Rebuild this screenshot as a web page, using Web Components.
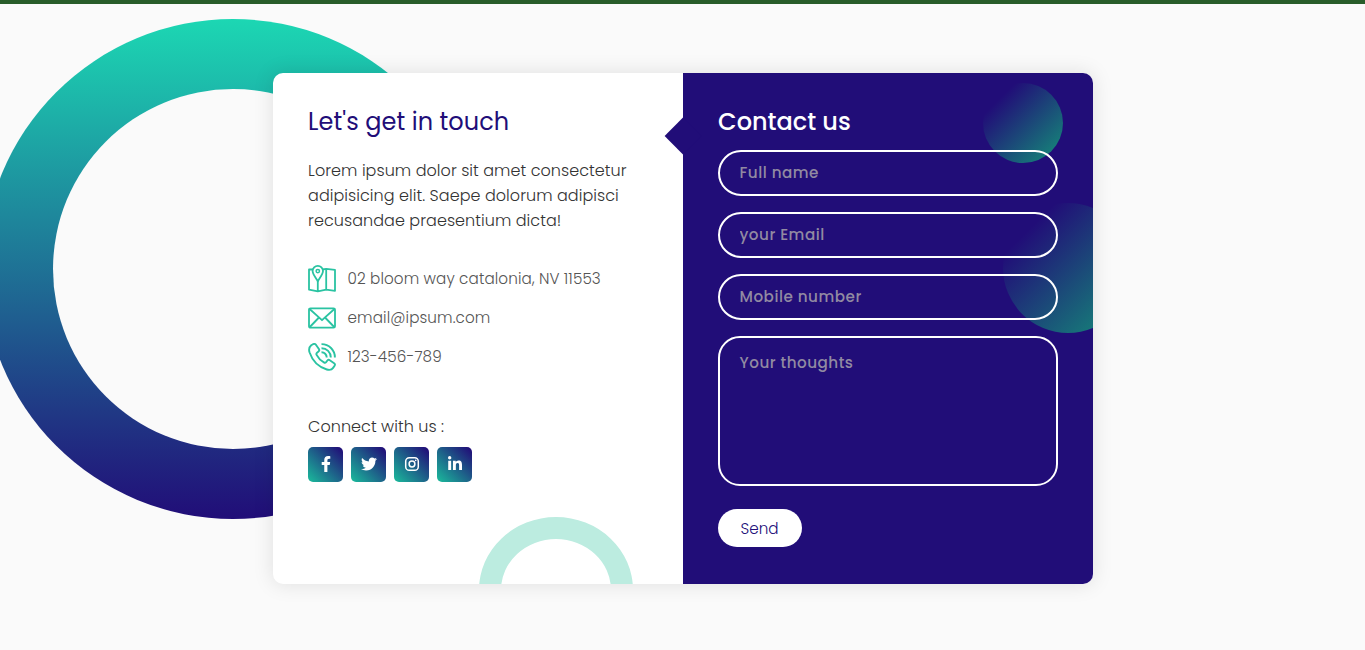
<!DOCTYPE html>
<html lang="en"><head><meta charset="utf-8"><title>Contact us</title>
<style>
html,body{height:100%}
body{margin:0;background:#fafafa;overflow:hidden;font-family:Poppins,Inter,"Open Sans",sans-serif;font-feature-settings:"cv11"}
</style></head><body>
<contact-page>
  <contact-card>
    <contact-info slot="info">
      <info-row icon="map">02 bloom way catalonia, NV 11553</info-row>
      <info-row icon="mail">email@ipsum.com</info-row>
      <info-row icon="phone">123-456-789</info-row>
      <social-link slot="social" icon="facebook"></social-link>
      <social-link slot="social" icon="twitter"></social-link>
      <social-link slot="social" icon="instagram"></social-link>
      <social-link slot="social" icon="linkedin"></social-link>
    </contact-info>
    <contact-form slot="form">
      <form-field label="Full name"></form-field>
      <form-field label="your Email"></form-field>
      <form-field label="Mobile number"></form-field>
      <form-field label="Your thoughts" multiline></form-field>
      <send-button slot="action">Send</send-button>
    </contact-form>
  </contact-card>
</contact-page>
<script>
const ICONS = {
  map: `<svg viewBox="0 0 28 28" fill="none" stroke="#2ac3a2" stroke-width="1.8" stroke-linejoin="round"><path d="M5 4.500H1v20.200l8.800 1.700 8.400-1.700 8.800 1.200V4.900l-8.800-1-3.600.6M9.800 16v10.400M18.200 3.900v20.800"/><path d="M9.800 16.200C7 11.900 4.600 8.900 4.600 6.100a5.200 5.200 0 0 1 10.400 0c0 2.800-2.400 5.800-5.200 10.100z"/><circle cx="9.800" cy="6.100" r="1.700" stroke-width="1.500"/></svg>`,
  mail: `<svg viewBox="0 0 28 28" fill="none" stroke="#2ac3a2" stroke-width="1.8" stroke-linejoin="round" stroke-linecap="round"><rect x="1" y="4.300" width="26" height="19.400" rx="1.500"/><path d="m1.600 5 12.400 11.200L26.400 5M1.800 23l8.700-9M26.200 23l-8.700-9"/></svg>`,
  phone: `<svg viewBox="0 0 28 28" fill="none" stroke="#2ac3a2" stroke-width="1.9" stroke-linejoin="round" stroke-linecap="butt"><path d="M3.200 2.300 5 1.200C6.300.6 7.200.8 7.900 1.700l3 4.300c.6 1 .4 1.900-.4 2.500L9 9.700c-.7.600-.8 1.300-.4 2.100 1.600 3.100 4 5.700 7.300 7.600.8.500 1.600.400 2.200-.300l1.300-1.600c.6-.7 1.500-.9 2.400-.3l4.300 3c.9.700 1.100 1.600.500 2.500l-1.500 2.200c-1.300 2-3.600 2.400-6.300 1.600C10.900 24.100 4.300 17.600 1.500 9.300.700 6.500 1 4.100 3.200 2.300z"/><path d="M13.500 1.100A13.300 13.300 0 0 1 26.900 14.500M13.500 5.200A9.200 9.200 0 0 1 22.800 14.500M13.500 9.300A5.100 5.100 0 0 1 18.700 14.500"/></svg>`,
  facebook: `<svg viewBox="0 0 320 512" fill="#fff"><path d="M279.14 288l14.220-92.660h-88.910v-60.130c0-25.350 12.420-50.060 52.240-50.060h40.420V6.260S260.430 0 225.360 0c-73.220 0-121.080 44.380-121.080 124.720v70.620H22.890V288h81.390v224h100.170V288z"/></svg>`,
  twitter: `<svg viewBox="0 0 512 512" fill="#fff"><path d="M459.370 151.716c.325 4.548.325 9.097.325 13.645 0 138.720-105.583 298.558-298.558 298.558-59.452 0-114.680-17.219-161.137-47.106 8.447.974 16.568 1.299 25.340 1.299 49.055 0 94.213-16.568 130.274-44.832-46.132-.975-84.792-31.188-98.112-72.772 6.498.974 12.995 1.624 19.818 1.624 9.421 0 18.843-1.300 27.614-3.573-48.081-9.747-84.143-51.980-84.143-102.985v-1.299c13.969 7.797 30.214 12.670 47.431 13.319-28.264-18.843-46.781-51.005-46.781-87.391 0-19.492 5.197-37.360 14.294-52.954 51.655 63.675 129.300 105.258 216.365 109.807-1.624-7.797-2.599-15.918-2.599-24.040 0-57.828 46.782-104.934 104.934-104.934 30.213 0 57.502 12.670 76.670 33.137 23.715-4.548 46.456-13.320 66.599-25.340-7.798 24.366-24.366 44.833-46.132 57.827 21.117-2.273 41.584-8.122 60.426-16.243-14.292 20.791-32.161 39.308-52.628 54.253z"/></svg>`,
  instagram: `<svg viewBox="0 0 16 16" fill="none" stroke="#fff" stroke-width="1.500"><rect x="1.700" y="1.700" width="12.600" height="12.600" rx="3.600"/><circle cx="8" cy="8" r="2.900"/><circle cx="11.700" cy="4.300" r=".85" fill="#fff" stroke="none"/></svg>`,
  linkedin: `<svg viewBox="0 0 448 512" fill="#fff"><path d="M100.280 448H7.400V148.900h92.880zM53.790 108.100C24.090 108.100 0 83.500 0 53.800a53.790 53.790 0 0 1 107.580 0c0 29.700-24.100 54.300-53.790 54.300zM447.900 448h-92.680V302.400c0-34.700-.7-79.200-48.290-79.200-48.290 0-55.690 37.700-55.690 76.700V448h-92.780V148.900h89.080v40.800h1.300c12.400-23.500 42.690-48.300 87.880-48.300 94 0 111.280 61.900 111.280 142.300V448z"/></svg>`
};

const define = (name, render) => customElements.define(name, class extends HTMLElement {
  connectedCallback() {
    if (!this.shadowRoot) this.attachShadow({mode: 'open'}).innerHTML = render(this);
  }
});

define('contact-page', () => `<style>
  :host{display:flex;justify-content:center;align-items:flex-start;position:relative;box-sizing:border-box;height:650px;padding-top:69px;border-top:4px solid #285d2a;overflow:hidden;background:#fafafa}
  .ring{position:absolute;left:-17px;top:15px;width:500px;height:500px;border-radius:50%;background:linear-gradient(#1cd7b3,#210d78)}
  .ring::after{content:"";position:absolute;inset:70px;border-radius:50%;background:#fafafa}
  ::slotted(*){position:relative}
</style><div class="ring"></div><slot></slot>`);

define('contact-card', () => `<style>
  :host{display:grid;grid-template-columns:1fr 1fr;width:820px;height:511px;border-radius:10px;background:#fff;box-shadow:0 0 20px 1px rgba(0,0,0,.1);overflow:hidden}
</style><slot name="info"></slot><slot name="form"></slot>`);

define('contact-info', () => `<style>
  :host{display:block;position:relative;box-sizing:border-box;padding:33px 35px;overflow:hidden}
  h3{margin:0;padding-left:.6px;font-size:24px;line-height:32px;font-weight:400;color:#210d78;letter-spacing:.06px}
  p{margin:20px 0 26px;padding-left:.6px;font-size:16px;line-height:25px;font-weight:300;color:#333;letter-spacing:.05px}
  p span{display:block;white-space:nowrap}
  .connect{margin-top:38px;padding-left:.6px;font-size:16px;line-height:26px;font-weight:300;color:#333;letter-spacing:.04px}
  .social{display:flex;gap:8px;margin-top:7px}
  .arc{position:absolute;left:206px;top:444px;width:154px;height:146px;box-sizing:border-box;border:22px solid #bcece0;border-radius:50%}
</style><div class="arc"></div>
<h3>Let's get in touch</h3>
<p><span>Lorem ipsum dolor sit amet consectetur</span><span>adipisicing elit. Saepe dolorum adipisci</span><span>recusandae praesentium dicta!</span></p>
<slot></slot>
<div class="connect">Connect with us :</div>
<div class="social"><slot name="social"></slot></div>`);

define('info-row', el => `<style>
  :host{display:flex;align-items:center;height:39px;font-size:15.2px;font-weight:300;color:#555;white-space:nowrap;letter-spacing:.11px}
  svg{display:block;width:28px;height:28px;margin-right:12px}
</style>${ICONS[el.getAttribute('icon')]}<span><slot></slot></span>`);

define('social-link', el => `<style>
  :host{display:flex;box-sizing:border-box;width:35px;height:35px;padding-left:1px;align-items:center;justify-content:center;border-radius:5px;background:linear-gradient(45deg,#1abc9c,#210d78 96%)}
  svg{display:block;height:16px;margin-top:-1px}
</style>${ICONS[el.getAttribute('icon')]}`);

define('contact-form', () => `<style>
  :host{display:block;position:relative;background:#210d78}
  .arrow{position:absolute;width:26px;height:26px;left:-13px;top:50px;background:#210d78;transform:rotate(45deg)}
  .bubbles{position:absolute;inset:0;overflow:hidden}
  .bubbles i{position:absolute;border-radius:50%;background:linear-gradient(135deg,transparent 20%,#149279)}
  .bubbles i:first-child{width:80px;height:80px;top:10px;right:30px}
  .bubbles i:last-child{width:130px;height:130px;top:130px;right:-40px}
  form{position:relative;display:flex;flex-direction:column;align-items:flex-start;gap:16px;padding:33px 35px}
  h3{margin:0 0 -4px;padding-left:.6px;font-size:24px;line-height:32px;font-weight:500;color:#fff}
  .action{margin-top:7px}
</style><div class="arrow"></div><div class="bubbles"><i></i><i></i></div>
<form><h3>Contact us</h3><slot></slot><div class="action"><slot name="action"></slot></div></form>`);

define('form-field', el => {
  const label = el.getAttribute('label');
  return `<style>
  :host{display:block;width:340px}
  input,textarea{display:block;width:100%;height:46px;box-sizing:border-box;margin:0;border:2px solid #fff;border-radius:25px;background:none;color:#fff;font:500 15.2px Poppins,Inter,"Open Sans",sans-serif;font-feature-settings:"cv11";letter-spacing:.5px;padding:0 20px 2px;outline:none;resize:none}
  textarea{height:150px;padding:13px 20px;border-radius:22px;overflow:hidden}
  ::placeholder{color:#918aa2;opacity:1}
</style>${el.hasAttribute('multiline') ? `<textarea placeholder="${label}"></textarea>` : `<input placeholder="${label}">`}`;
});

define('send-button', () => `<style>
  :host{display:block}
  button{display:block;width:84px;height:38px;padding:1px 0 0;border:0;border-radius:25px;background:#fff;color:#210d78;font:300 15.2px Poppins,Inter,"Open Sans",sans-serif}
</style><button type="button"><slot></slot></button>`);
</script></body></html>
